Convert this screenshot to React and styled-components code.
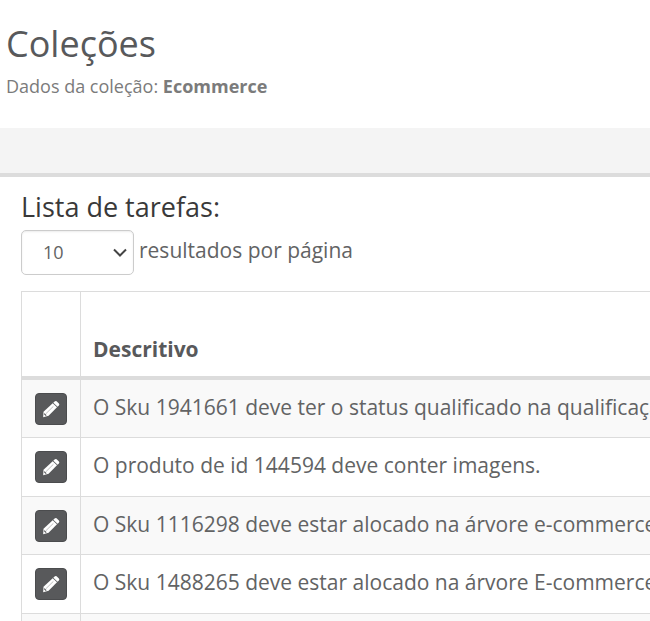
import React, { useState } from 'react';
import styled, { createGlobalStyle } from 'styled-components';

const GlobalStyle = createGlobalStyle`
  * {
    box-sizing: border-box;
  }

  body {
    margin: 0;
    background: #fff;
    color: #626364;
    font-family: 'Open Sans', 'Noto Sans', sans-serif;
    font-size: 21px;
    line-height: 30px;
  }
`;

const Page = styled.div`
  height: 100vh;
  overflow: hidden;
`;

const Header = styled.header`
  padding: 19px 6px 28px;

  h1 {
    margin: 0;
    color: #58595b;
    font-size: 36px;
    font-weight: 400;
    line-height: 50px;
  }

  p {
    margin: 3px 0 0;
    color: #7b7b7b;
    font-size: 18px;
    line-height: 28px;
  }
`;

const Toolbar = styled.div`
  height: 49px;
  background: #f4f4f4;
  border-bottom: 4px solid #dcdcdc;
`;

const Content = styled.main`
  padding: 12px 0 0 21px;

  h2 {
    margin: 0;
    color: #393939;
    font-size: 27px;
    font-weight: 400;
    line-height: 36px;
  }
`;

const LengthField = styled.div`
  display: flex;
  align-items: flex-start;
  gap: 5px;
  margin: 5px 0 16px;

  label {
    padding-top: 5px;
  }
`;

const SelectBox = styled.div`
  position: relative;

  svg {
    position: absolute;
    top: 17px;
    right: 6px;
    pointer-events: none;
  }
`;

const Select = styled.select`
  display: block;
  width: 113px;
  height: 45px;
  padding: 0 21px 2px;
  appearance: none;
  background: #fff;
  border: 1px solid #ccc;
  border-radius: 5px;
  box-shadow: inset 0 1px 2px rgba(0, 0, 0, 0.08);
  color: #626364;
  font-family: inherit;
  font-size: 18px;
`;

const Table = styled.table`
  width: 100%;
  border-collapse: separate;
  border-spacing: 0;
  border-top: 1px solid #dcdcdc;
  border-left: 1px solid #dcdcdc;
  white-space: nowrap;

  th,
  td {
    padding: 12px;
    border-right: 1px solid #dcdcdc;
    text-align: left;
    vertical-align: top;
  }

  th {
    height: 88px;
    border-bottom: 4px solid #dcdcdc;
    color: #58595b;
    font-weight: 700;
    vertical-align: bottom;
  }

  td {
    height: 58px;
    border-bottom: 1px solid #dcdcdc;
  }

  th:first-child,
  td:first-child {
    width: 59px;
    padding: 13px 13px 12px;
  }

  tbody tr:nth-child(odd) {
    background: #f9f9f9;
  }

  tbody tr:nth-child(even) td {
    height: 59px;
  }
`;

const EditButton = styled.button`
  display: flex;
  align-items: center;
  justify-content: center;
  width: 32px;
  height: 32px;
  padding: 0;
  background: #58595b;
  border: 1px solid #4b4c4e;
  border-radius: 4px;
  color: #fff;
  cursor: pointer;
`;

const tasks = [
  { id: 1, text: 'O Sku 1941661 deve ter o status qualificado na qualificação' },
  { id: 2, text: 'O produto de id 144594 deve conter imagens.' },
  { id: 3, text: 'O Sku 1116298 deve estar alocado na árvore e-commerce.' },
  { id: 4, text: 'O Sku 1488265 deve estar alocado na árvore E-commerce.' },
  { id: 5, text: '' },
];

function PencilIcon() {
  return (
    <svg width="18" height="18" viewBox="0 0 18 18" fill="currentColor" aria-hidden="true">
      <path d="M12.6 1.5q1-1 2-.2l2.3 2.2q.9.9 0 1.9l-1.3 1.3-4.3-3.9z" />
      <path d="M10.7 3.3l4.3 4-8.4 8.4-5.4 1.5.3-5.4z" />
      <path d="M11.4 6.3l-7.6 7.5" fill="none" stroke="#58595b" strokeWidth="0.4" />
      <path d="M2.2 13.6l2 2" fill="none" stroke="#58595b" strokeWidth="1.2" />
    </svg>
  );
}

function App() {
  const [pageSize, setPageSize] = useState('10');

  return (
    <Page>
      <GlobalStyle />
      <Header>
        <h1>Coleções</h1>
        <p>
          Dados da coleção: <strong>Ecommerce</strong>
        </p>
      </Header>
      <Toolbar />
      <Content>
        <h2>Lista de tarefas:</h2>
        <LengthField>
          <SelectBox>
            <Select id="page-size" value={pageSize} onChange={(e) => setPageSize(e.target.value)}>
              <option value="10">10</option>
              <option value="25">25</option>
              <option value="50">50</option>
            </Select>
            <svg width="16" height="12" viewBox="0 0 16 12" fill="none" stroke="#444" strokeWidth="2" aria-hidden="true">
              <path d="M2 2.5l6 6 6-6" />
            </svg>
          </SelectBox>
          <label htmlFor="page-size">resultados por página</label>
        </LengthField>
        <Table>
          <thead>
            <tr>
              <th aria-label="Editar" />
              <th>Descritivo</th>
            </tr>
          </thead>
          <tbody>
            {tasks.map((task) => (
              <tr key={task.id}>
                <td>
                  <EditButton type="button" aria-label="Editar">
                    <PencilIcon />
                  </EditButton>
                </td>
                <td>{task.text}</td>
              </tr>
            ))}
          </tbody>
        </Table>
      </Content>
    </Page>
  );
}

export default App;
